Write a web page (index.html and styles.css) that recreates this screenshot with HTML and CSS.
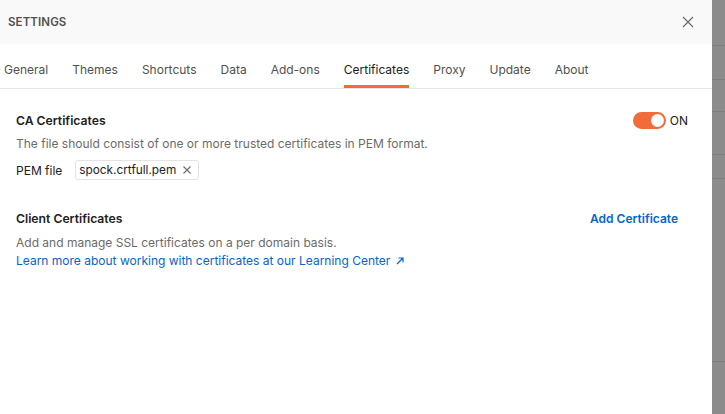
FILE: index.html
```html
<!DOCTYPE html>
<html>
<head>
<meta charset="utf-8">
<link rel="stylesheet" href="styles.css">
</head>
<body>
<div class="app">
  <div class="modal">
    <div class="header">
      <span class="title">SETTINGS</span>
      <svg class="close" width="12" height="12" viewBox="0 0 12 12"><path d="M1 1L11 11M11 1L1 11" stroke="#6b6b6b" stroke-width="1.2" fill="none"/></svg>
    </div>
    <div class="tabs">
      <span class="tab">General</span>
      <span class="tab">Themes</span>
      <span class="tab">Shortcuts</span>
      <span class="tab">Data</span>
      <span class="tab">Add-ons</span>
      <span class="tab active">Certificates</span>
      <span class="tab">Proxy</span>
      <span class="tab">Update</span>
      <span class="tab">About</span>
    </div>
    <div class="content">
      <div class="section-head">
        <span class="section-title">CA Certificates</span>
        <span class="toggle-wrap"><span class="toggle"><span class="knob"></span></span><span class="on">ON</span></span>
      </div>
      <p class="desc">The file should consist of one or more trusted certificates in PEM format.</p>
      <div class="pem-row">
        <span class="pem-label">PEM file</span>
        <span class="chip">spock.crtfull.pem<svg class="chip-x" width="8" height="8" viewBox="0 0 8 8"><path d="M0.5 0.5L7.5 7.5M7.5 0.5L0.5 7.5" stroke="#6b6b6b" stroke-width="1.1" fill="none"/></svg></span>
      </div>
      <div class="section-head client">
        <span class="section-title">Client Certificates</span>
        <span class="add">Add Certificate</span>
      </div>
      <p class="desc desc2">Add and manage SSL certificates on a per domain basis.</p>
      <a class="link">Learn more about working with certificates at our Learning Center <svg width="8" height="8" viewBox="0 0 8 8"><path d="M1 7L7 1M2.5 1H7V5.5" stroke="#0265d2" stroke-width="1.2" fill="none"/></svg></a>
    </div>
  </div>
  <div class="backdrop">
    <div class="bd r1"></div>
    <div class="bd r2"></div>
    <div class="bd r3"></div>
    <div class="bd r4"></div>
    <div class="bd r5"></div>
    <div class="bd r6"></div>
  </div>
</div>
</body>
</html>
```
FILE: styles.css
```css
* { box-sizing: border-box; }
html, body { margin: 0; padding: 0; }
body { font-family: Inter, "Noto Sans", sans-serif; color: #212121; background: #fff; }
.app { display: flex; width: 725px; height: 414px; overflow: hidden; }
.modal { width: 712px; height: 414px; background: #fff; display: flex; flex-direction: column; }
.header { height: 44px; background: #f9f9f9; display: flex; align-items: center; justify-content: space-between; padding: 0 18px 0 8px; }
.title { font-size: 11.5px; font-weight: 600; color: #505050; letter-spacing: 0.1px; }
.close { display: block; }
.tabs { display: flex; height: 45px; border-bottom: 1px solid #e6e6e6; padding-left: 4px; gap: 24px; }
.tab { font-size: 12px; color: #505050; height: 44px; line-height: 20px; padding-top: 16px; border-bottom: 3px solid transparent; }
.tab.active { color: #212121; border-bottom-color: #f26b3a; }
.content { padding: 23px 16px 0 16px; }
.section-head { display: flex; justify-content: space-between; align-items: center; height: 16px; }
.section-title { font-size: 12.2px; font-weight: 600; color: #212121; }
.toggle-wrap { display: flex; align-items: center; gap: 4px; margin-right: 8px; }
.toggle { width: 33px; height: 17px; border-radius: 9px; background: #f26b3a; position: relative; display: block; }
.knob { position: absolute; right: 2px; top: 2px; width: 13px; height: 13px; border-radius: 50%; background: #fff; }
.on { font-size: 12px; color: #212121; }
.desc { margin: 8px 0 0; font-size: 12px; color: #6b6b6b; line-height: 16px; }
.pem-row { display: flex; align-items: center; gap: 13px; margin-top: 8px; }
.pem-label { font-size: 12px; color: #212121; }
.chip { display: flex; align-items: center; gap: 7px; height: 20px; border: 1px solid #e3e3e3; border-radius: 3px; padding: 0 7px 0 3px; font-size: 11.8px; color: #212121; }
.chip-x { display: block; }
.client { margin-top: 30px; }
.add { font-size: 12px; font-weight: 600; color: #0265d2; margin-right: 18px; }
.desc2 { margin-top: 9px; }
.link { display: block; margin-top: 2px; font-size: 12px; color: #0265d2; line-height: 16px; }
.link svg { display: inline-block; margin-left: 2px; }
.backdrop { flex: 1; background: #8b8b8b; display: flex; flex-direction: column; }
.bd { border-bottom: 1px solid #7e7e7e; flex-shrink: 0; }
.r1 { height: 46px; }
.r2 { height: 34px; }
.r3 { height: 32px; }
.r4 { height: 43px; }
.r5 { height: 24px; }
.r6 { height: 183px; }
```
